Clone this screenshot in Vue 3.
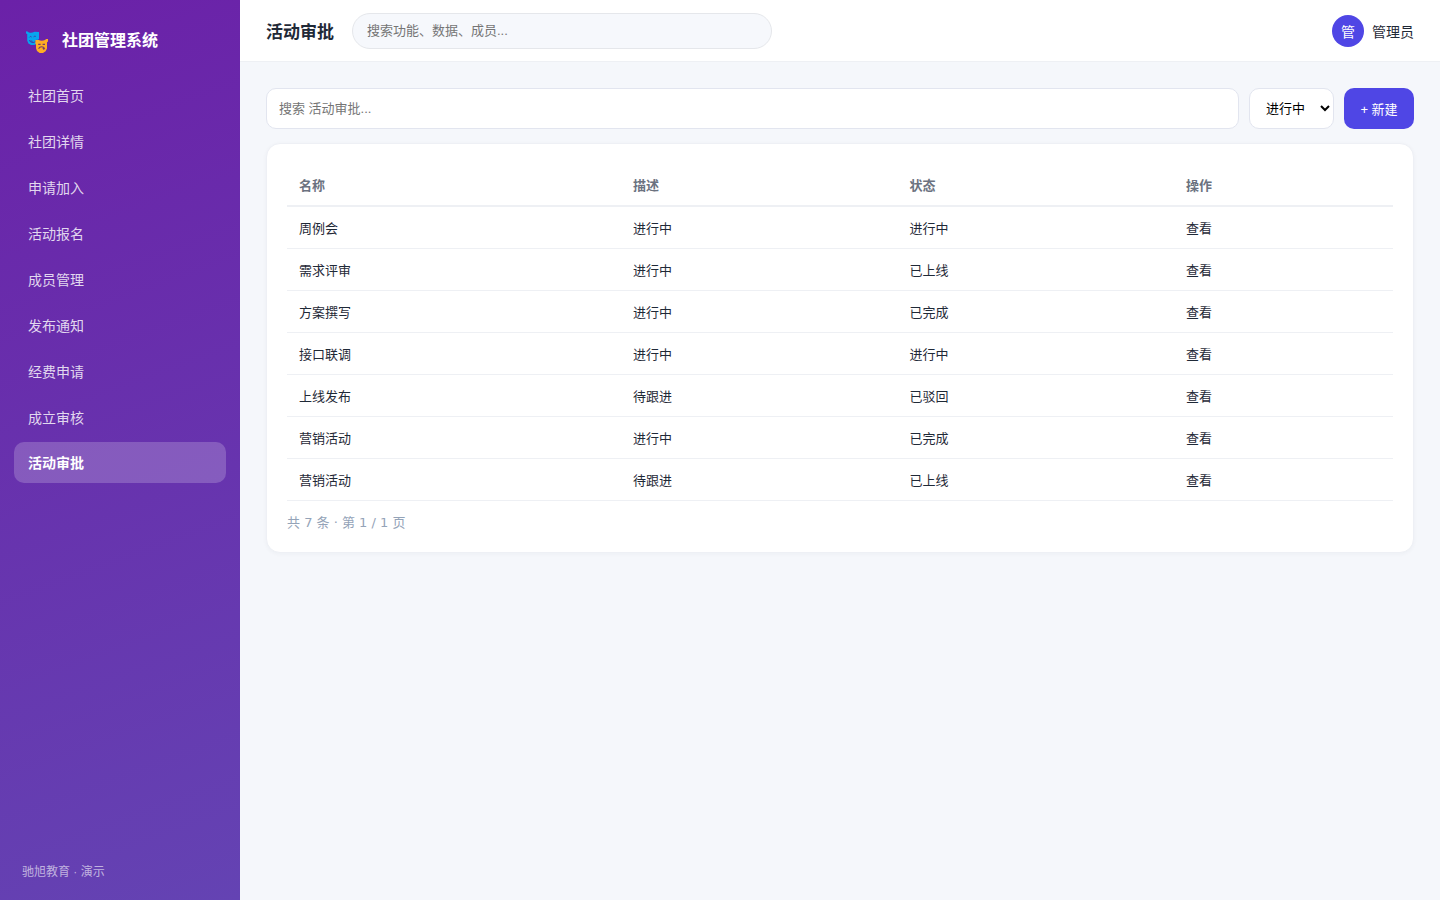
<script setup>
import { ref } from 'vue'

const navItems = ['社团首页', '社团详情', '申请加入', '活动报名', '成员管理', '发布通知', '经费申请', '成立审核', '活动审批']
const active = ref('活动审批')
const globalSearch = ref('')
const keyword = ref('')
const status = ref('进行中')
const statuses = ['进行中', '已上线', '已完成', '已驳回']
const rows = [
  { name: '周例会', desc: '进行中', state: '进行中' },
  { name: '需求评审', desc: '进行中', state: '已上线' },
  { name: '方案撰写', desc: '进行中', state: '已完成' },
  { name: '接口联调', desc: '进行中', state: '进行中' },
  { name: '上线发布', desc: '待跟进', state: '已驳回' },
  { name: '营销活动', desc: '进行中', state: '已完成' },
  { name: '营销活动', desc: '待跟进', state: '已上线' }
]
</script>

<template>
  <div class="layout">
    <aside class="sidebar">
      <div class="brand">
        <svg class="logo" viewBox="0 0 24 24" aria-hidden="true">
          <path d="M1 1.6 L2 1.2 L4 2.4 Q6.5 3.2 9 2 L9.6 1.8 L14 2 L14 9 L12.6 10 L11.4 13.8 L9.4 15 L6 15 L3.4 13.4 L2.2 10.4 L2.2 4 L1 3.4 Z" fill="#08a5ee" />
          <path d="M4.4 7.4 L5.4 6.4 L6.6 7 M8.6 6.8 L9.8 6.2 L10.8 6.4 M4.2 10.2 Q5.2 12.6 8 12.6 Q11 12.4 11.6 9.8 M5.4 10.8 L7.6 11.4" fill="none" stroke="#3d3fb0" stroke-width="1" />
          <path d="M10.4 10 L13.6 10 Q16.8 11.4 20 10 L21.2 9 L23 9 L23 11.6 L22 12.2 L22 18.4 L20.6 21.2 L18 23 L14.6 23 L12 21 L11 18.2 L11 14.6 L10.4 14 Z" fill="#ffad24" />
          <path d="M13.2 14.4 L15.6 14.4 M17.6 14.4 L20 14.4 M13.6 18.8 Q14.4 16.8 16.6 16.8 Q18.8 16.8 19.8 18.8 M17.8 18 L19.2 19.6" fill="none" stroke="#793b68" stroke-width="1.1" />
        </svg>
        <span>社团管理系统</span>
      </div>
      <nav class="nav">
        <a v-for="item in navItems" :key="item" href="#" :class="{ active: item === active }" @click.prevent="active = item">{{ item }}</a>
      </nav>
      <div class="side-foot">驰旭教育 · 演示</div>
    </aside>

    <div class="main">
      <header class="topbar">
        <h1>活动审批</h1>
        <input v-model="globalSearch" class="global-search" type="text" aria-label="全局搜索" placeholder="搜索功能、数据、成员...">
        <div class="user">
          <span class="avatar">管</span>
          <span>管理员</span>
        </div>
      </header>

      <main class="content">
        <div class="toolbar">
          <input v-model="keyword" class="keyword" type="text" aria-label="搜索活动审批" placeholder="搜索 活动审批...">
          <select v-model="status" aria-label="状态">
            <option v-for="s in statuses" :key="s">{{ s }}</option>
          </select>
          <button type="button">+ 新建</button>
        </div>
        <section class="card">
          <table>
            <colgroup>
              <col class="col-name"><col class="col-mid"><col class="col-mid"><col>
            </colgroup>
            <thead>
              <tr><th>名称</th><th>描述</th><th>状态</th><th>操作</th></tr>
            </thead>
            <tbody>
              <tr v-for="(row, i) in rows" :key="i">
                <td>{{ row.name }}</td>
                <td>{{ row.desc }}</td>
                <td>{{ row.state }}</td>
                <td><a href="#" @click.prevent>查看</a></td>
              </tr>
            </tbody>
          </table>
          <div class="pager">共 7 条 · 第 1 / 1 页</div>
        </section>
      </main>
    </div>
  </div>
</template>

<style>
body {
  margin: 0;
  background: #f5f7fb;
}
</style>

<style scoped>
.layout,
.layout * {
  box-sizing: border-box;
}
.layout {
  display: flex;
  min-height: 100vh;
  background: #f5f7fb;
  color: #1f2937;
  font-family: "Liberation Sans", "Noto Sans CJK SC", sans-serif;
  font-size: 14px;
}
.layout input,
.layout select,
.layout button {
  font-family: inherit;
  font-size: 13px;
}
.sidebar {
  display: flex;
  flex-direction: column;
  flex: none;
  width: 240px;
  padding: 22px 14px 18px;
  background: linear-gradient(160deg, #6b21a8, #6443b3);
  color: #fff;
}
.brand {
  display: flex;
  align-items: center;
  gap: 13px;
  height: 36px;
  margin-bottom: 16px;
  padding: 0 0 2px 11px;
  font-size: 16px;
  font-weight: 700;
}
.logo {
  width: 24px;
  height: 24px;
  margin-top: 6px;
}
.nav {
  display: flex;
  flex-direction: column;
  gap: 4px;
}
.nav a {
  height: 42px;
  padding: 0 14px;
  border-radius: 10px;
  line-height: 44px;
  color: rgba(255, 255, 255, 0.82);
  text-decoration: none;
}
.nav a.active {
  height: 41px;
  line-height: 42px;
  background: rgba(255, 255, 255, 0.2);
  color: #fff;
  font-weight: 700;
}
.side-foot {
  margin-top: auto;
  padding-left: 8px;
  font-size: 12px;
  line-height: 20px;
  color: rgba(255, 255, 255, 0.6);
}
.main {
  flex: 1;
  min-width: 0;
}
.topbar {
  display: flex;
  align-items: center;
  height: 62px;
  padding: 0 26px;
  border-bottom: 1px solid #eef0f4;
  background: #fff;
}
h1 {
  margin: 0 18px 0 0;
  font-size: 17px;
  font-weight: 700;
  white-space: nowrap;
}
.global-search {
  flex: 0 1 420px;
  min-width: 0;
  height: 36px;
  padding: 0 14px;
  border: 1px solid #e5e7eb;
  border-radius: 18px;
  outline: none;
  background: #f6f8fc;
}
.user {
  display: flex;
  align-items: center;
  gap: 8px;
  margin-left: auto;
}
.avatar {
  display: flex;
  align-items: center;
  justify-content: center;
  width: 32px;
  height: 32px;
  border-radius: 50%;
  background: #4f46e5;
  color: #fff;
}
.content {
  padding: 26px;
}
.toolbar {
  display: flex;
  gap: 10px;
  height: 41px;
  margin-bottom: 14px;
}
.keyword {
  flex: 1;
  min-width: 0;
  padding: 0 12px;
  border: 1px solid #e2e5ef;
  border-radius: 10px;
  outline: none;
  background: #fff;
}
.toolbar select {
  width: 85px;
  padding: 0 0 0 12px;
  border: 1px solid #e2e5ef;
  border-radius: 10px;
  background: #fff;
  color: #000;
}
.toolbar button {
  width: 70px;
  padding: 0;
  border: 0;
  border-radius: 10px;
  background: #4f46e5;
  color: #fff;
}
.card {
  padding: 20px;
  border: 1px solid #eef0f5;
  border-radius: 14px;
  background: #fff;
  box-shadow: 0 1px 4px rgba(30, 41, 80, 0.04);
}
table {
  width: 100%;
  border-collapse: separate;
  border-spacing: 0;
  table-layout: fixed;
  font-size: 13px;
}
.col-name {
  width: 30.2%;
}
.col-mid {
  width: 25%;
}
th,
td {
  height: 42px;
  padding: 0 12px;
  border-bottom: 1px solid #eef0f4;
  text-align: left;
}
th {
  height: 43px;
  border-bottom-width: 2px;
  color: #6b7280;
  font-weight: 700;
}
td a {
  color: inherit;
  text-decoration: none;
}
.pager {
  margin-top: 12px;
  font-family: "DejaVu Sans", "Noto Sans CJK SC", sans-serif;
  font-size: 13px;
  line-height: 19px;
  color: #94a3b8;
}
</style>
